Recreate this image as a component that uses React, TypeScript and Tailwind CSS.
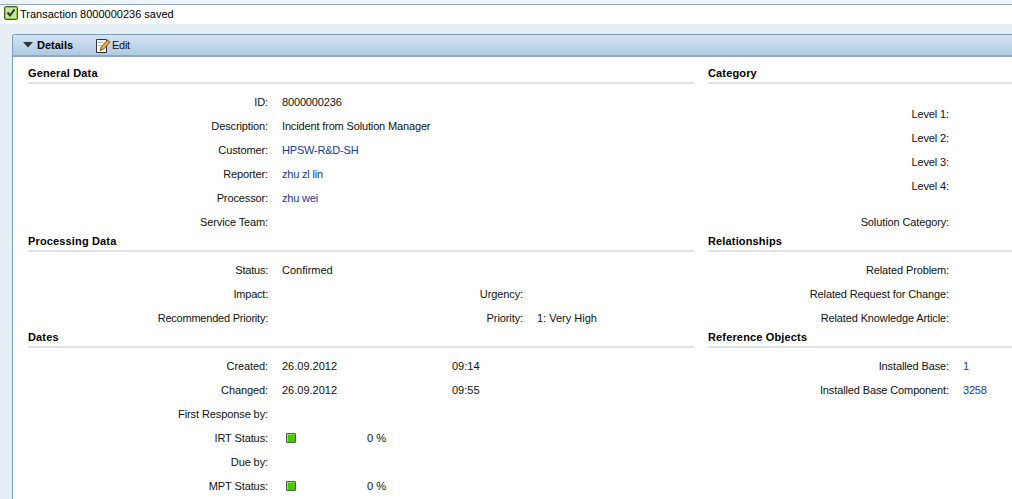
function Led() {
  return (
    <span className="block h-[10px] w-[10px] rounded-[1px] border border-[#4a5a4a] bg-[#44cc00] shadow-[inset_1px_1px_0_#8fe860]" />
  );
}

function Title({ children }: { children: React.ReactNode }) {
  return (
    <div className="h-6 pt-[2px]">
      <div className="h-[16px] border-b-2 border-[#dfe3e6] text-[11px] leading-[10px] font-bold tracking-[0.15px] text-black">{children}</div>
    </div>
  );
}

function Row({ label, value, link, lw = "w-[240px]" }: { label?: string; value?: string; link?: boolean; lw?: string }) {
  return (
    <div className="flex h-6 items-center">
      <div className={`${lw} shrink-0 text-right tracking-[-0.12px]`}>{label}</div>
      <div className={`ml-[14px] ${link ? "tracking-[-0.2px] text-[#17399b]" : "tracking-[-0.15px]"}`}>{value}</div>
    </div>
  );
}

function TwoPart({ l1, v1, l2, v2 }: { l1: string; v1?: string; l2: string; v2?: string }) {
  return (
    <div className="flex h-6 items-center">
      <div className="w-[240px] shrink-0 text-right tracking-[-0.22px]">{l1}</div>
      <div className="ml-[14px] w-[100px] shrink-0">{v1}</div>
      <div className="w-[141px] shrink-0 text-right tracking-[-0.1px]">{l2}</div>
      <div className="ml-[14px]">{v2}</div>
    </div>
  );
}

function DateRow({ label, date, time }: { label: string; date?: string; time?: string }) {
  return (
    <div className="flex h-6 items-center">
      <div className="w-[240px] shrink-0 text-right tracking-[-0.1px]">{label}</div>
      <div className="ml-[14px] w-[170px] shrink-0">{date}</div>
      <div>{time}</div>
    </div>
  );
}

function StatusRow({ label }: { label: string }) {
  return (
    <div className="flex h-6 items-center">
      <div className="w-[240px] shrink-0 text-right tracking-[-0.1px]">{label}</div>
      <div className="ml-[18px] w-[81px] shrink-0"><Led /></div>
      <div>0 %</div>
    </div>
  );
}

export default function App() {
  return (
    <div className="[font-family:Liberation_Sans,Arial,sans-serif] h-[499px] w-[1012px] overflow-hidden bg-[#e6eef6] text-[11px] text-[#111]">
      <div className="h-[4px] bg-[#edf3f8]" />
      <div className="flex h-[20px] items-center border-t border-[#92a9c4] bg-white pl-[4px]">
        <svg width="14" height="14" viewBox="0 0 14 14" className="mb-[3px]">
          <rect x="0.5" y="0.5" width="13" height="13" rx="1.5" fill="#8fc93f" stroke="#4a5a2a" />
          <rect x="2" y="2" width="10" height="10" fill="#c6e79a" />
          <path d="M3.5 6.5 L6 9.5 L10.5 3.5" fill="none" stroke="#1f3a2a" strokeWidth="2" />
        </svg>
        <span className="ml-[2px] text-[11px] text-black">Transaction 8000000236 saved</span>
      </div>
      <div className="ml-[12px] mt-[10px] h-[465px] rounded-tl-[3px] border-l border-t border-[#7f9cc2] bg-white">
        <div className="flex h-[22px] items-center rounded-tl-[3px] border-b-2 border-[#8fa9c6] bg-gradient-to-b from-[#d5e3f2] to-[#aecae2] pl-[10px]">
          <svg width="10" height="6" viewBox="0 0 10 6"><path d="M0 0 H10 L5 5.5 Z" fill="#2a3440" /></svg>
          <span className="ml-[4px] font-bold text-black">Details</span>
          <svg width="15" height="15" viewBox="0 0 15 15" className="ml-[23px]">
            <path d="M0.5 1.5 H10.5 V14.5 H0.5 Z" fill="#fff" stroke="#333" />
            <path d="M2 4.5 H7 M2 7.5 H6" stroke="#b8b8b8" />
            <path d="M4 12.5 L5 9 L11.5 2 L14 4.3 L7.5 11.2 Z" fill="#f2a93b" stroke="#5a4015" strokeWidth="0.8" />
          </svg>
          <span className="ml-[1px] tracking-[-0.3px] text-[#111]">Edit</span>
        </div>
        <div className="flex pl-[15px] pt-[9px]">
          <div className="w-[666px] shrink-0">
            <Title>General Data</Title>
            <Row label="ID:" value="8000000236" />
            <Row label="Description:" value="Incident from Solution Manager" />
            <Row label="Customer:" value="HPSW-R&D-SH" link />
            <Row label="Reporter:" value="zhu zl lin" link />
            <Row label="Processor:" value="zhu wei" link />
            <Row label="Service Team:" />
            <Title>Processing Data</Title>
            <TwoPart l1="Status:" v1="Confirmed" l2="" />
            <TwoPart l1="Impact:" l2="Urgency:" />
            <TwoPart l1="Recommended Priority:" l2="Priority:" v2="1: Very High" />
            <Title>Dates</Title>
            <DateRow label="Created:" date="26.09.2012" time="09:14" />
            <DateRow label="Changed:" date="26.09.2012" time="09:55" />
            <DateRow label="First Response by:" />
            <StatusRow label="IRT Status:" />
            <DateRow label="Due by:" />
            <StatusRow label="MPT Status:" />
          </div>
          <div className="ml-[14px] w-[304px] shrink-0">
            <Title>Category</Title>
            <div className="pt-3">
              <Row label="Level 1:" lw="w-[241px]" />
              <Row label="Level 2:" lw="w-[241px]" />
              <Row label="Level 3:" lw="w-[241px]" />
              <Row label="Level 4:" lw="w-[241px]" />
            </div>
            <div className="pt-3">
              <Row label="Solution Category:" lw="w-[241px]" />
            </div>
            <Title>Relationships</Title>
            <Row label="Related Problem:" lw="w-[241px]" />
            <Row label="Related Request for Change:" lw="w-[241px]" />
            <Row label="Related Knowledge Article:" lw="w-[241px]" />
            <Title>Reference Objects</Title>
            <Row label="Installed Base:" value="1" link lw="w-[241px]" />
            <Row label="Installed Base Component:" value="3258" link lw="w-[241px]" />
          </div>
        </div>
      </div>
    </div>
  );
}
